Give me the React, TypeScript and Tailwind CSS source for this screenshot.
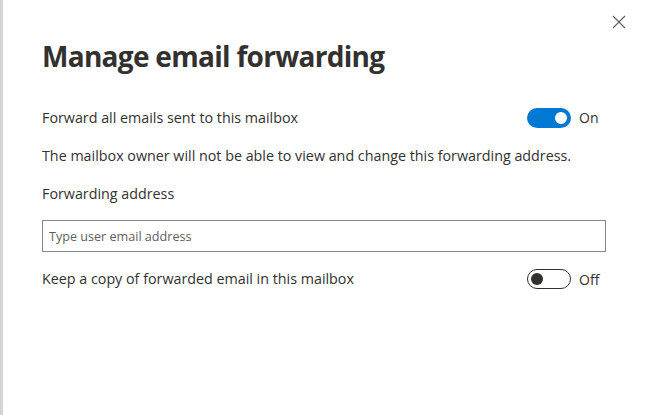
function CloseIcon() {
  return (
    <svg width="14" height="14" viewBox="0 0 14 14" className="text-[#605e5c]">
      <path d="M1 1L13 13M13 1L1 13" stroke="currentColor" strokeWidth="1.1" fill="none" />
    </svg>
  )
}

function Toggle({ on }: { on: boolean }) {
  return (
    <div className="flex items-center gap-2">
      <button
        type="button"
        className={
          on
            ? "flex h-5 w-11 items-center justify-end rounded-full bg-[#0078d4] px-[4px]"
            : "flex h-5 w-11 items-center justify-start rounded-full border border-[#323130] bg-white px-[3px]"
        }
      >
        <span className={on ? "h-3 w-3 rounded-full bg-white" : "h-3 w-3 rounded-full bg-[#323130]"} />
      </button>
      <span className="w-[27px] text-[14px] text-[#323130]">{on ? "On" : "Off"}</span>
    </div>
  )
}

export default function App() {
  return (
    <div
      className="h-[415px] w-[646px] overflow-hidden border-l-[3px] border-[#d4d4d4] bg-white text-[#323130]"
      style={{ fontFamily: '"Open Sans", "Noto Sans", Arial, sans-serif' }}
    >
      <div className="flex justify-end pr-[20px] pt-[15px]">
        <CloseIcon />
      </div>
      <div className="pl-[39px] pr-[40px]">
        <h1 className="mt-[9px] text-[28px] font-bold leading-[36px] tracking-[-0.7px]">Manage email forwarding</h1>

        <div className="mt-[33px] flex items-center justify-between">
          <span className="text-[14.3px]">Forward all emails sent to this mailbox</span>
          <Toggle on />
        </div>

        <p className="mt-[17px] text-[14.3px]">
          The mailbox owner will not be able to view and change this forwarding address.
        </p>

        <p className="mt-[16px] text-[14.3px]">Forwarding address</p>

        <input
          type="text"
          placeholder="Type user email address"
          className="mt-[16px] h-[32px] w-full border border-[#8a8886] px-[6px] text-[12.6px] text-[#323130] outline-none placeholder:text-[#605e5c]"
        />

        <div className="mt-[16px] flex items-center justify-between">
          <span className="text-[14.3px]">Keep a copy of forwarded email in this mailbox</span>
          <Toggle on={false} />
        </div>
      </div>
    </div>
  )
}
